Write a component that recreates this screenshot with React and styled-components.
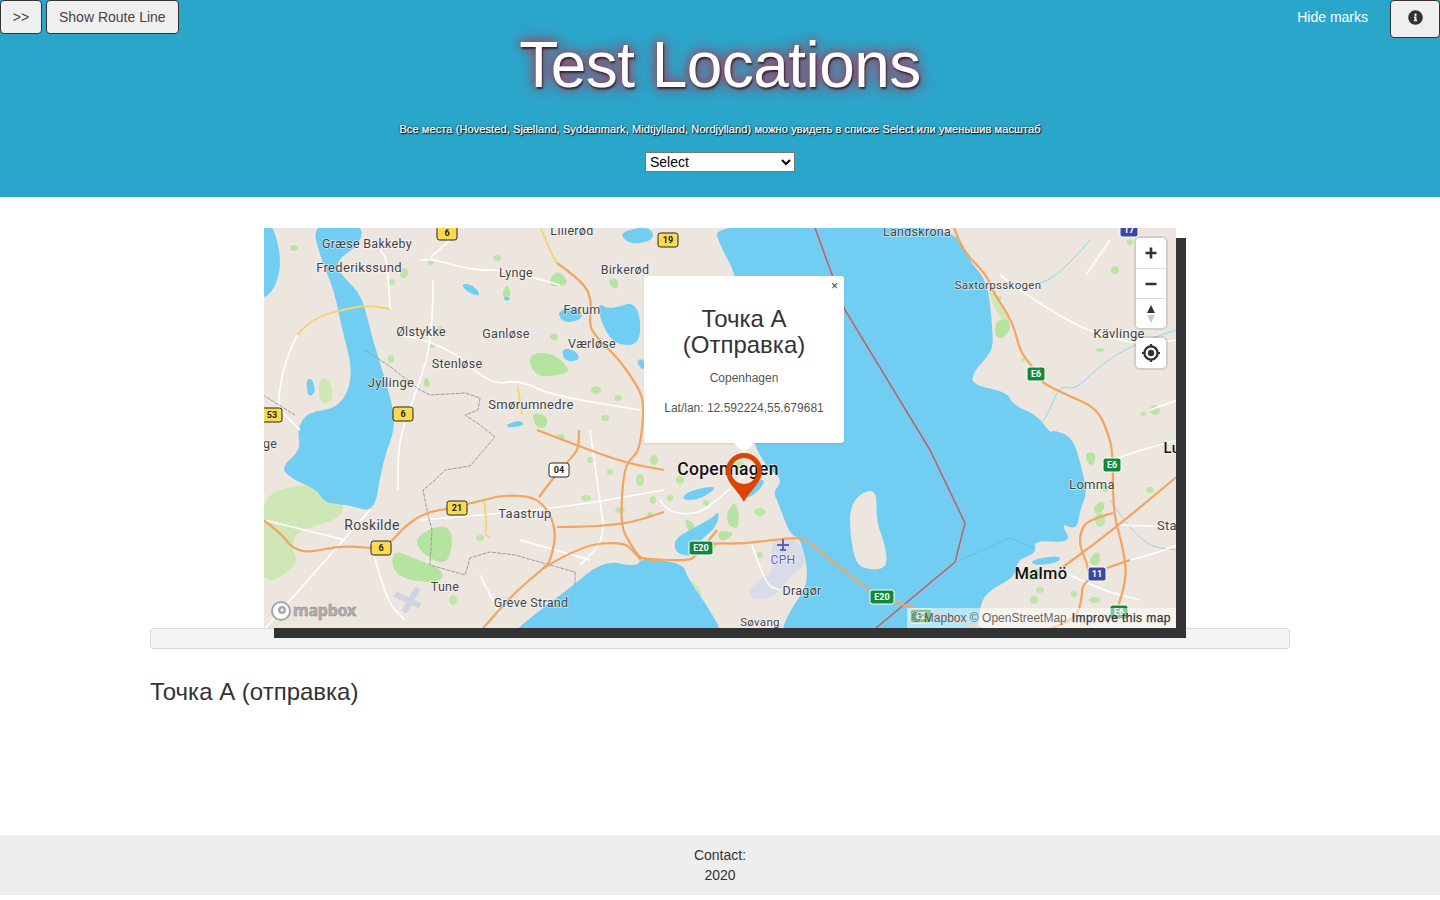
import styled, { createGlobalStyle } from "styled-components";
import { FaInfoCircle } from "react-icons/fa";

const GlobalStyle = createGlobalStyle`
    body {
        margin: 0;
        background: #fff;
        font-family: "Liberation Sans", Arial, sans-serif;
        font-size: 14px;
        color: #333;
    }
`;

const Header = styled.header`
    height: 197px;
    background: #2ba6cb;
    text-align: center;
    color: #fff;
`;

const TopBar = styled.div`
    display: flex;
    align-items: flex-start;
    justify-content: space-between;
`;

const ButtonGroup = styled.div`
    display: flex;
    align-items: flex-start;
    gap: 4px;
`;

const Button = styled.button`
    height: ${(p) => p.$height || 34}px;
    width: ${(p) => (p.$width ? p.$width + "px" : "auto")};
    padding: 0 12px;
    border: 1px solid #333;
    border-radius: 4px;
    background: #efefef;
    color: #444;
    font-family: inherit;
    font-size: 14px;
    display: flex;
    align-items: center;
    justify-content: center;
    cursor: pointer;
`;

const InfoIcon = styled(FaInfoCircle)`
    margin-bottom: 4px;
    color: #333;
`;

const HideMarks = styled.a`
    color: #fff;
    font-size: 14px;
    line-height: 34px;
    margin-right: 18px;
`;

const Title = styled.h1`
    margin: -8px 0 0;
    font-size: 64px;
    line-height: 70px;
    font-weight: 400;
    letter-spacing: -0.55px;
    text-shadow: 1px 2px 2px rgba(0, 0, 0, 0.6), 0 0 10px rgba(190, 40, 70, 0.95), 0 0 16px rgba(190, 40, 70, 0.8);
`;

const Subtitle = styled.p`
    margin: 22px 0 0;
    font-size: 11px;
    line-height: 14px;
    letter-spacing: 0.1px;
    -webkit-text-stroke: 0.2px #fff;
    text-shadow: 1px 1px 1px #000, 0 0 3px rgba(0, 0, 0, 0.7);
`;

const CitySelect = styled.select`
    display: block;
    width: 150px;
    height: 20px;
    margin: 16px auto 0;
    padding: 0;
    background: #fff;
    color: #000;
    border: 1px solid #767676;
    font-family: inherit;
    font-size: 14px;
`;

const Main = styled.main`
    width: 1140px;
    height: 638px;
    margin: 0 auto;
    padding-top: 31px;
    box-sizing: border-box;
`;

const MapFrame = styled.div`
    position: relative;
    z-index: 1;
    width: 912px;
    height: 400px;
    margin: 0 auto;
    background: #ede6df;
    box-shadow: 10px 10px 0 #333;
    font-size: 12px;
`;

const MapSvg = styled.svg`
    display: block;
    width: 912px;
    height: 400px;
`;

const PlaceName = styled.text`
    font-family: Roboto, "Noto Sans", sans-serif;
    font-size: ${(p) => p.$size || 12.5}px;
    font-weight: ${(p) => (p.$strong ? 500 : 400)};
    letter-spacing: 0.3px;
    fill: ${(p) => p.$color || "#3f4347"};
    stroke: rgba(255, 255, 255, 0.6);
    stroke-width: 1.4px;
    paint-order: stroke;
    text-anchor: middle;
`;

const ShieldText = styled.text`
    font-family: Roboto, sans-serif;
    font-size: 9px;
    font-weight: 700;
    fill: ${(p) => p.$color};
    text-anchor: middle;
`;

const LogoText = styled.text`
    font-family: "Noto Sans", sans-serif;
    font-size: 16px;
    font-weight: 700;
    fill: #b0b0b0;
    stroke: #8c8c8c;
    stroke-width: 0.5px;
    letter-spacing: -0.2px;
`;

const Popup = styled.div`
    position: absolute;
    left: 380px;
    top: 48px;
    width: 200px;
    height: 167px;
    box-sizing: border-box;
    padding: 30px 10px 0;
    background: #fff;
    border-radius: 3px;
    box-shadow: 0 1px 2px rgba(0, 0, 0, 0.1);
    text-align: center;
    color: #333;

    &::after {
        content: "";
        position: absolute;
        left: 90px;
        bottom: -10px;
        border-left: 10px solid transparent;
        border-right: 10px solid transparent;
        border-top: 10px solid #fff;
    }
`;

const PopupClose = styled.span`
    position: absolute;
    top: 3px;
    right: 6px;
    font-size: 12px;
    line-height: 14px;
`;

const PopupTitle = styled.div`
    font-size: 24px;
    line-height: 26px;
`;

const PopupText = styled.div`
    margin-top: ${(p) => p.$gap}px;
    font-size: 12px;
    line-height: 14px;
    color: #555;
`;

const Controls = styled.div`
    position: absolute;
    top: 10px;
    right: 10px;
    display: flex;
    flex-direction: column;
    gap: 10px;
`;

const ControlGroup = styled.div`
    width: 30px;
    border-radius: 4px;
    background: #fff;
    box-shadow: 0 0 0 2px rgba(0, 0, 0, 0.1);
    overflow: hidden;
`;

const ControlButton = styled.div`
    height: 30px;
    display: flex;
    align-items: center;
    justify-content: center;
    border-top: ${(p) => (p.$first ? "none" : "1px solid #ddd")};
    box-sizing: border-box;
`;

const Attribution = styled.div`
    position: absolute;
    right: 0;
    bottom: 0;
    display: flex;
    gap: 5px;
    height: 20px;
    align-items: center;
    padding: 0 5px;
    background: rgba(255, 255, 255, 0.5);
    color: rgba(0, 0, 0, 0.62);
    font-size: 12px;
    white-space: nowrap;
`;

const AttributionStrong = styled.span`
    color: #333;
    letter-spacing: 0.45px;
    -webkit-text-stroke: 0.25px #333;
`;

const Well = styled.div`
    height: 21px;
    box-sizing: border-box;
    border: 1px solid #d8d8d8;
    border-radius: 4px;
    background: #f5f5f5;
`;

const Heading = styled.h3`
    margin: 30px 0 0;
    font-size: 24px;
    line-height: 26px;
    font-weight: 400;
`;

const Footer = styled.footer`
    height: 60px;
    background: #eee;
    box-sizing: border-box;
    padding-top: 10px;
    text-align: center;
    line-height: 20px;
`;

// turns "M x y L x y ..." outlines into rounded curves, so coast and roads don't look like polygons
const smooth = (d) =>
    d
        .split("M")
        .filter((part) => part.trim())
        .map((part) => {
            const closed = part.includes("Z");
            const pts = part
                .replace("Z", "")
                .trim()
                .split("L")
                .map((p) => p.trim().split(/\s+/).map(Number));
            if (pts.length < 3) return "M" + pts.map((p) => p.join(" ")).join(" L");
            const mid = (a, b) => [(a[0] + b[0]) / 2, (a[1] + b[1]) / 2];
            if (closed) {
                const start = mid(pts[pts.length - 1], pts[0]);
                const body = pts.map((p, i) => {
                    const m = mid(p, pts[(i + 1) % pts.length]);
                    return `Q${p[0]} ${p[1]} ${m[0]} ${m[1]}`;
                });
                return `M${start[0]} ${start[1]} ${body.join(" ")} Z`;
            }
            const body = pts.slice(1, -1).map((p, i) => {
                const m = mid(p, pts[i + 2]);
                return `Q${p[0]} ${p[1]} ${m[0]} ${m[1]}`;
            });
            const last = pts[pts.length - 1];
            return `M${pts[0][0]} ${pts[0][1]} ${body.join(" ")} L${last[0]} ${last[1]}`;
        })
        .join(" ");

const water = [
    "M712 222 L722 250 L735 272 L745 330 L750 420 L754 445 L767 467 L783 480 L773 492 L778 502 L790 535 L800 537 L808 570 L805 590 L790 610 L778 640 L977 640 L980 603 L990 590 L1015 577 L1017 560 L1037 553 L1033 540 L1073 543 L1060 523 L1077 530 L1080 510 L1087 493 L1083 473 L1073 437 L1053 430 L1050 433 L1037 415 L1013 405 L1007 392 L972 385 L973 372 L992 352 L993 335 L988 282 L970 262 L950 222 Z",
    "M505 640 L531 617 L571 587 L604 560 L637 567 L641 558 L683 563 L687 577 L710 610 L726 640 Z",
    "M674 548 L676 538 L690 530 L712 518 L720 510 L716 528 L700 540 L694 556 L680 555 Z",
    "M311 222 L361 222 L362 243 L334 262 L344 278 L362 295 L372 338 L384 375 L394 412 L394 430 L387 450 L381 472 L374 513 L350 505 L324 503 L318 490 L290 478 L281 467 L301 450 L297 430 L307 412 L340 408 L354 375 L341 325 L334 290 L322 262 Z",
    "M258 222 L272 222 L282 260 L275 290 L258 302 Z",
    "M638 300 L610 310 L597 302 L602 325 L615 345 L642 345 Z",
    "M556 312 L575 305 L585 318 L565 324 Z",
    "M561 348 L575 350 L581 360 L565 362 Z",
    "M636 362 L644 358 L644 372 Z",
    "M618 232 L650 226 L655 240 L630 245 Z",
    "M460 284 L472 284 L482 296 L470 294 Z",
    "M502 296 L512 298 L506 302 Z",
    "M306 380 L312 378 L316 392 L308 398 Z",
    "M505 425 L520 420 L525 425 L510 428 Z",
    "M738 495 L750 484 L766 478 L760 490 L745 500 Z",
    "M680 500 L690 490 L720 485 L700 500 Z",
    "M1030 560 L1060 555 L1060 562 L1035 566 Z",
];

const islands = [
    "M850 505 L865 490 L877 492 L876 520 L886 548 L887 568 L870 570 L856 565 L850 535 Z",
];

const softGreens = [
    "M258 497 L300 483 L340 490 L345 515 L320 525 L300 530 L290 545 L300 565 L258 590 Z",
    "M301 460 L314 447 L330 460 L344 473 L325 470 L310 472 Z",
    "M335 470 L350 478 L345 500 L330 495 Z",
    "M318 380 L328 376 L335 400 L320 406 Z",
    "M687 577 L703 590 L700 603 L692 595 Z",
    "M985 285 L1000 300 L1012 325 L1000 320 Z",
];

const greens = [
    "M527 354 L552 352 L569 368 L567 374 L535 378 Z",
    "M546 287 L557 268 L571 285 Z",
    "M501 297 L507 282 L512 297 Z",
    "M606 280 L619 278 L617 292 Z",
    "M547 337 L557 332 L558 342 Z",
    "M427 375 L431 388 L422 385 Z",
    "M531 412 L547 415 L547 428 L536 428 Z",
    "M414 537 L444 523 L454 537 L447 567 L421 553 Z",
    "M394 550 L411 557 L444 570 L441 583 L404 580 L391 567 Z",
    "M727 525 L727 510 L737 500 L740 530 Z",
    "M717 530 L737 533 L720 543 Z",
    "M683 517 L697 525 L690 535 Z",
    "M995 322 L1005 318 L1012 325 L1005 338 L995 338 Z",
    "M1093 507 L1103 500 L1105 510 L1095 515 Z",
    "M1090 557 L1100 550 L1100 565 L1090 565 Z",
    "M1083 453 L1097 452 L1092 470 Z",
    "M1153 340 L1170 338 L1162 345 Z",
    "M1020 580 L1040 565 L1044 580 Z",
];

const patches = [
    [294, 248, 4, 3], [326, 250, 3, 2], [404, 273, 4, 5], [392, 282, 3, 3], [431, 262, 3, 3], [497, 258, 4, 3],
    [440, 329, 3, 3], [432, 346, 3, 2], [391, 359, 3, 4], [596, 390, 5, 4], [605, 418, 4, 3], [618, 398, 4, 3],
    [590, 460, 3, 3], [640, 480, 4, 6], [620, 510, 5, 3], [586, 498, 5, 3], [560, 437, 5, 3], [610, 472, 3, 3],
    [480, 538, 4, 3], [453, 600, 4, 5], [712, 545, 4, 4], [760, 512, 6, 4], [1115, 270, 4, 4], [1155, 410, 5, 5],
    [1100, 520, 5, 7], [1095, 600, 6, 3], [1034, 600, 4, 4], [1150, 490, 4, 3], [654, 460, 4, 5], [1142, 355, 4, 3],
    [692, 590, 3, 3], [1060, 492, 3, 3], [1105, 488, 3, 4], [1040, 590, 4, 3], [1074, 594, 3, 3], [1143, 414, 3, 2],
    [670, 498, 3, 3], [706, 503, 3, 3], [740, 465, 4, 4], [680, 480, 4, 4], [650, 515, 3, 3], [760, 555, 3, 3],
    [1023, 360, 2, 2], [1100, 350, 4, 2], [1000, 298, 2, 2], [1130, 242, 3, 3], [640, 362, 3, 3], [653, 500, 3, 4],
];

const rivers = [
    "M1176 330 L1130 345 L1095 370 L1075 390 L1060 385 L1050 410 L1040 425",
    "M1090 240 L1060 275 L1035 285",
    "M1110 500 L1140 545 L1176 550",
];

const motorways = [
    "M557 263 L584 282 L592 302 L589 325 L597 338 L617 357 L637 385 L644 402 L642 432 L638 453 L626 463 L622 490 L621 527 L631 545 L641 560 L664 560",
    "M537 430 L581 447 L626 463 L664 470",
    "M579 430 L579 447 L574 455 L554 477 L539 497",
    "M258 516 L281 533 L291 547 L307 553 L344 545 L384 550 L404 527 L424 513 L451 508 L484 500 L504 495 L539 497 L557 527 L551 560 L544 568 L514 593 L478 634",
    "M557 527 L617 527 L664 512",
    "M544 568 L581 545 L624 542 L634 552 L641 560",
    "M640 558 L687 562 L697 555 L717 530",
    "M690 548 L713 543 L740 544 L797 537 L807 540 L873 595 L910 607 L960 620 L990 632",
    "M953 224 L960 248 L987 275 L993 292 L1013 322 L1020 352 L1033 367 L1040 382 L1067 395 L1097 408 L1108 433 L1113 453 L1113 513 L1123 547 L1127 577 L1117 610",
    "M1180 474 L1117 527 L1063 567",
    "M1113 513 L1087 520 L1080 533 L1080 547 L1087 563 L1089 575",
    "M1107 568 L1130 560",
    "M1098 575 L1082 582 L1082 600 L1075 620 L1040 632",
];

const yellowRoads = [
    "M539 224 L551 253 L557 263",
    "M297 335 L310 320 L340 310 L368 305 L390 309",
    "M484 500 L487 525 L485 535 L490 537",
    "M518 388 L522 415",
];

const whiteRoads = [
    "M297 335 L285 360 L278 400 L280 410 L300 430",
    "M390 309 L388 260 L380 250",
    "M420 260 L430 258 L470 270 L505 270 L560 285",
    "M430 258 L450 240",
    "M433 280 L433 340 L415 395 L405 420 L398 450 L398 490",
    "M400 335 L445 343 L490 385 L520 380 L550 395 L640 410",
    "M262 632 L370 510",
    "M264 520 L345 540",
    "M370 540 L385 600 L405 620",
    "M420 520 L550 510 L664 490",
    "M480 575 L500 615",
    "M520 540 L590 560",
    "M590 430 L600 500 L605 540 L580 565",
    "M660 500 L667 512 L697 515 L720 498 L745 475",
    "M752 545 L765 585 L780 590",
    "M1000 275 L1060 320 L1130 345 L1178 340",
    "M1086 275 L1110 240",
    "M1150 410 L1178 400",
    "M1113 460 L1140 450 L1178 440",
    "M1130 560 L1150 555 L1178 545",
    "M1120 525 L1178 527",
    "M1060 570 L1100 590 L1140 600",
];

const borders = [
    "M258 392 L295 415",
    "M365 350 L392 368 L420 390 L430 395 L465 393 L480 398 L478 410 L465 415 L480 425 L495 437 L488 445 L470 466 L445 470 L435 480 L423 490 L428 515 L432 530 L430 565 L465 575 L470 558 L490 552 L515 555 L550 565 L575 572 L575 585",
];

const places = [
    ["Græse Bakkeby", 367, 248, 12.5],
    ["Frederikssund", 359, 272, 13],
    ["Lillerød", 572, 235, 12.5],
    ["Lynge", 516, 277, 12.5],
    ["Birkerød", 625, 274, 12.5],
    ["Farum", 582, 314, 12.5],
    ["Ølstykke", 421, 336, 12.5],
    ["Ganløse", 506, 338, 12.5],
    ["Værløse", 592, 348, 12.5],
    ["Stenløse", 457, 368, 12.5],
    ["Jyllinge", 391, 387, 13],
    ["Smørumnedre", 531, 409, 13],
    ["ge", 270, 448, 12.5],
    ["Roskilde", 372, 530, 14],
    ["Taastrup", 525, 518, 13],
    ["Tune", 445, 591, 12.5],
    ["Greve Strand", 531, 607, 12.5],
    ["Dragør", 802, 595, 12.5],
    ["Søvang", 760, 626, 11.5],
    ["CPH", 783, 564, 12, "#5a66b8"],
    ["Lomma", 1092, 489, 13],
    ["Kävlinge", 1119, 338, 13],
    ["Saxtorpsskogen", 998, 289, 11.5],
    ["Landskrona", 917, 236, 12.5],
    ["Sta", 1167, 530, 13],
];

const cities = [
    ["Copenhagen", 728, 475, 17.5],
    ["Malmö", 1041, 579, 16.5],
    ["Lu", 1172, 453, 15],
];

const shields = [
    ["6", 447, 233, 20, "yellow"],
    ["19", 668, 240, 20, "yellow"],
    ["53", 272, 415, 20, "yellow"],
    ["6", 403, 414, 20, "yellow"],
    ["04", 559, 470, 20, "white"],
    ["21", 457, 508, 20, "yellow"],
    ["6", 381, 548, 20, "yellow"],
    ["E20", 701, 548, 24, "green"],
    ["E20", 882, 597, 24, "green"],
    ["E6", 1036, 374, 18, "green"],
    ["E6", 1112, 465, 18, "green"],
    ["E6", 1119, 612, 18, "green"],
    ["E2", 921, 616, 22, "green"],
    ["11", 1097, 574, 18, "blue"],
    ["17", 1129, 230, 18, "blue"],
];

const shieldColors = {
    yellow: { bg: "#fdd94f", border: "#222", text: "#222" },
    white: { bg: "#fff", border: "#222", text: "#222" },
    green: { bg: "#0f8a3c", border: "#fff", text: "#fff" },
    blue: { bg: "#3a479f", border: "#fff", text: "#fff" },
};

const PlusIcon = () => (
    <svg width="14" height="14" viewBox="0 0 14 14">
        <path d="M7 1.5v11M1.5 7h11" stroke="#333" strokeWidth="2.6" />
    </svg>
);

const MinusIcon = () => (
    <svg width="14" height="14" viewBox="0 0 14 14">
        <path d="M1.5 7h11" stroke="#333" strokeWidth="2.6" />
    </svg>
);

const CompassIcon = () => (
    <svg width="12" height="20" viewBox="0 0 12 20">
        <path d="M6 1l4 8H2z" fill="#333" />
        <path d="M6 19l4-8H2z" fill="#ccc" />
    </svg>
);

const LocateIcon = () => (
    <svg width="20" height="20" viewBox="0 0 20 20">
        <circle cx="10" cy="10" r="6.6" fill="none" stroke="#333" strokeWidth="2.4" />
        <circle cx="10" cy="10" r="3.2" fill="#333" />
        <path d="M10 1v3M10 16v3M1 10h3M16 10h3" stroke="#333" strokeWidth="2.2" />
    </svg>
);

const BaseMap = () => (
    <MapSvg viewBox="264 228 912 400">
        <rect x="264" y="228" width="912" height="400" fill="#ede6df" />
        {softGreens.map((d, i) => (
            <path key={i} d={smooth(d)} fill="#cfe7b6" />
        ))}
        {greens.map((d, i) => (
            <path key={i} d={smooth(d)} fill="#b5e3a0" />
        ))}
        {patches.map(([cx, cy, rx, ry], i) => (
            <ellipse key={i} cx={cx} cy={cy} rx={rx} ry={ry} fill="#bde6a6" />
        ))}
        {water.map((d, i) => (
            <path key={i} d={smooth(d)} fill="#72cdf2" />
        ))}
        {islands.map((d, i) => (
            <path key={i} d={smooth(d)} fill="#ede6df" />
        ))}
        <path d="M960 560 L1010 538 L1033 548" fill="none" stroke="#62bfe6" strokeWidth="1" />
        {rivers.map((d, i) => (
            <path key={i} d={smooth(d)} fill="none" stroke="#8fd3ee" strokeWidth="1" />
        ))}
        <path d={smooth("M770 550 L775 540 L800 540 L807 565 L790 575 L775 598 L748 600 L752 585 L775 570 Z")} fill="#d9dbe8" />
        <path d="M395 594 L420 606 M418 588 L404 612" stroke="#d0d3e2" strokeWidth="6" />
        {whiteRoads.map((d, i) => (
            <path key={i} d={smooth(d)} fill="none" stroke="#fff" strokeWidth="1.6" />
        ))}
        {borders.map((d, i) => (
            <path key={i} d={d} fill="none" stroke="#9a9ca6" strokeWidth="1" strokeDasharray="4 1" />
        ))}
        <path d="M815 228 L845 310 L930 450 L965 523 L955 562 L876 628" fill="none" stroke="#a6bcd2" strokeWidth="4" />
        <path d="M815 228 L845 310 L930 450 L965 523 L955 562 L876 628" fill="none" stroke="#7b7d92" strokeWidth="1.6" />
        {yellowRoads.map((d, i) => (
            <path key={i} d={smooth(d)} fill="none" stroke="#f5d36c" strokeWidth="1.8" />
        ))}
        {motorways.map((d, i) => (
            <path key={i} d={smooth(d)} fill="none" stroke="#f3a45f" strokeWidth="2.2" strokeLinejoin="round" />
        ))}
        {shields.map(([label, x, y, w, kind], i) => (
            <g key={i}>
                <rect x={x - w / 2} y={y - 7} width={w} height="14" rx="2.5" fill={shieldColors[kind].bg} stroke={shieldColors[kind].border} />
                <ShieldText x={x} y={y + 3} $color={shieldColors[kind].text}>{label}</ShieldText>
            </g>
        ))}
        <path d="M783 539v12M777 545h12M780 550h6" stroke="#5a66b8" strokeWidth="2" />
        {places.map(([label, x, y, size, color], i) => (
            <PlaceName key={i} x={x} y={y} $size={size} $color={color}>{label}</PlaceName>
        ))}
        {cities.map(([label, x, y, size], i) => (
            <PlaceName key={i} x={x} y={y} $size={size} $color="#111" $strong>{label}</PlaceName>
        ))}
        <circle cx="281" cy="611" r="9" fill="#fff" stroke="#a6a6a6" strokeWidth="2" />
        <circle cx="282" cy="610" r="4" fill="#a6a6a6" />
        <path d="M282 608v4M280 610h4" stroke="#fff" strokeWidth="1" />
        <LogoText x="293" y="616">mapbox</LogoText>
        <path
            fillRule="evenodd"
            fill="#dd4400"
            d="M744 502 C738 490 726 483 726 471 A18 18 0 1 1 762 471 C762 483 750 490 744 502 Z M744 458 a13 13 0 1 0 .01 0 Z"
        />
    </MapSvg>
);

const App = () => {
    return (
        <>
            <GlobalStyle />
            <Header>
                <TopBar>
                    <ButtonGroup>
                        <Button $width={42}>&gt;&gt;</Button>
                        <Button>Show Route Line</Button>
                    </ButtonGroup>
                    <ButtonGroup>
                        <HideMarks>Hide marks</HideMarks>
                        <Button $width={50} $height={38}>
                            <InfoIcon size={15} />
                        </Button>
                    </ButtonGroup>
                </TopBar>
                <Title>Test Locations</Title>
                <Subtitle>
                    Все места (Hovested, Sjælland, Syddanmark, Midtjylland, Nordjylland) можно увидеть в списке Select или уменьшив масштаб
                </Subtitle>
                <CitySelect defaultValue="select">
                    <option value="select">Select</option>
                </CitySelect>
            </Header>
            <Main>
                <MapFrame>
                    <BaseMap />
                    <Popup>
                        <PopupClose>×</PopupClose>
                        <PopupTitle>Точка А (Отправка)</PopupTitle>
                        <PopupText $gap={13}>Copenhagen</PopupText>
                        <PopupText $gap={16}>Lat/lan: 12.592224,55.679681</PopupText>
                    </Popup>
                    <Controls>
                        <ControlGroup>
                            <ControlButton $first><PlusIcon /></ControlButton>
                            <ControlButton><MinusIcon /></ControlButton>
                            <ControlButton><CompassIcon /></ControlButton>
                        </ControlGroup>
                        <ControlGroup>
                            <ControlButton $first><LocateIcon /></ControlButton>
                        </ControlGroup>
                    </Controls>
                    <Attribution>
                        <span>© Mapbox © OpenStreetMap</span>
                        <AttributionStrong>Improve this map</AttributionStrong>
                    </Attribution>
                </MapFrame>
                <Well />
                <Heading>Точка А (отправка)</Heading>
            </Main>
            <Footer>
                Contact:
                <br />
                2020
            </Footer>
        </>
    );
};

export default App;
